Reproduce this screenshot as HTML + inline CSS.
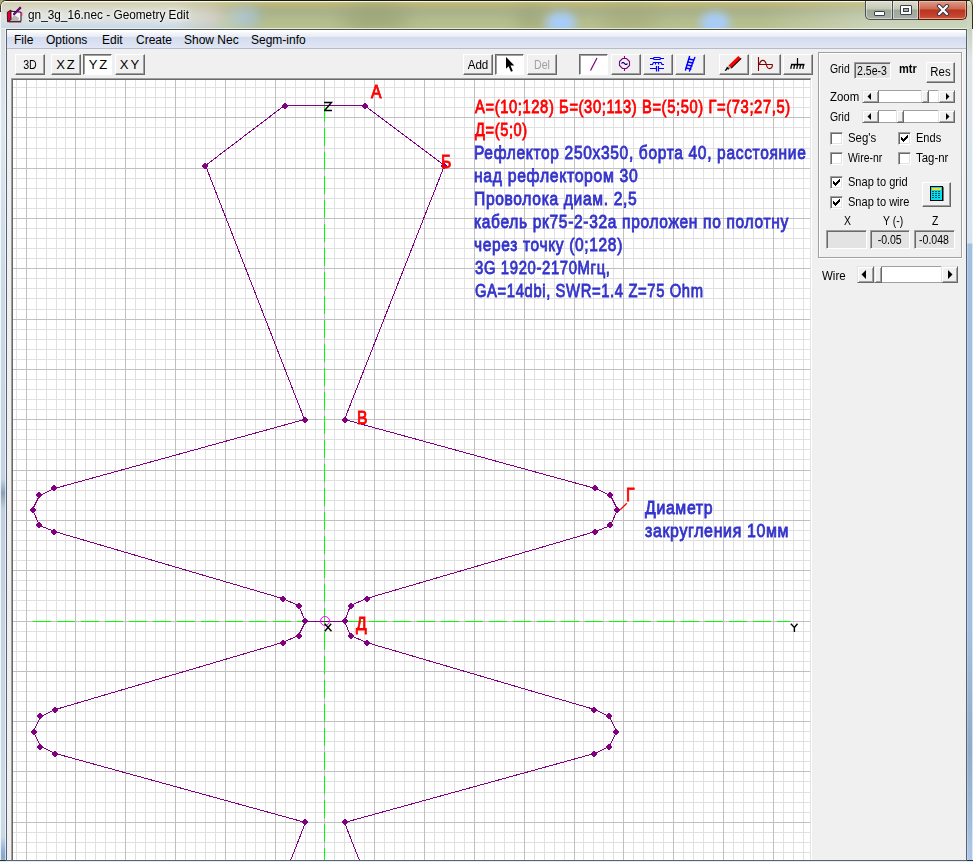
<!DOCTYPE html>
<html><head><meta charset="utf-8">
<style>
*{margin:0;padding:0;box-sizing:border-box}
html,body{width:973px;height:862px;overflow:hidden;font-family:"Liberation Sans",sans-serif;}
body{position:relative;background:#cbdbe8;}
.abs{position:absolute}
#title{left:0;top:0;width:973px;height:30px;overflow:hidden;
 background:linear-gradient(180deg,#1a1a10 0,#1a1a10 1px,#f4f4e8 1px,#c8c490 2px,#bcb878 4px,#acb088 10px,#aab48c 14px,#b4bc8c 20px,#b8c090 26px,#b8c090 28px);}
#title .blob{position:absolute;border-radius:50%;filter:blur(6px)}
#frameL{left:0;top:29px;width:6px;height:833px;background:linear-gradient(90deg,rgba(255,255,255,.8) 0,rgba(255,255,255,.8) 1px,rgba(255,255,255,0) 1px,rgba(255,255,255,0) 5px,rgba(255,255,255,.6) 5px),linear-gradient(180deg,#d8e0e4 0,#dce6f0 100px,#cbdbe8 250px,#c4d4e4 450px,#8ca0b8 464px,#c0d0e0 480px,#cbdbe8 780px,#c8d8e4 808px,#90b0d8 822px,#88a8c8 829px,#a0b8a8 831px)}
#frameR{left:966px;top:29px;width:7px;height:833px;background:linear-gradient(90deg,rgba(255,255,255,.5) 1px,rgba(255,255,255,0) 2px,rgba(255,255,255,0) 6px,rgba(255,255,255,.6) 6px),linear-gradient(180deg,#c8d0c0 0,#dfe6e8 31px,#d8e4f0 214px,#a4c0e0 215px,#a4c0e0 600px,#90acc8 720px,#a0bcdc 790px,#b0c8e4 833px)}
#client{left:6px;top:29px;width:961px;height:832px;border:1px solid #5a6470;border-top-color:#4c5444;background:#f0f0f0}
#menubar{left:7px;top:30px;width:959px;height:19px;background:linear-gradient(180deg,#ffffff 0,#ffffff 1px,#f4f6fa 3px,#e9edf5 6px,#e6eaf4 7px,#d3dbee 7px,#d6def0 10px,#dfe5f3 17px,#e2e8f5 18px);border-bottom:1px solid #b4bccc}
.menu{position:absolute;top:33px;font-size:12px;color:#000;line-height:14px}
.btn{position:absolute;height:21px;background:#f0f0f0;border-top:1px solid #fff;border-left:1px solid #fff;border-right:1px solid #696969;border-bottom:1px solid #696969;box-shadow:inset -1px -1px 0 #a0a0a0;}
.btn.pressed{background:#fff;border-top:1px solid #696969;border-left:1px solid #696969;border-right:1px solid #fff;border-bottom:1px solid #fff;box-shadow:inset 1px 1px 0 #a0a0a0;}
.btn span{position:absolute;left:0;right:0;text-align:center;font-size:12.5px;top:3px;line-height:15px;color:#000;transform:scaleX(.85)}
#canvas{left:11px;top:78px;width:800px;height:782px;border-top:1px solid #a0a0a0;border-left:1px solid #a0a0a0;}
.t{position:absolute;white-space:nowrap;font-weight:normal;font-size:19px;line-height:23px;-webkit-text-stroke:.85px currentColor;letter-spacing:.8px;transform-origin:0 0;transform:scaleX(0.83)}
.red{color:#ff0000}
.blue{color:#3333cc}
.lbl{position:absolute;font-size:12px;color:#000;line-height:14px;white-space:nowrap;transform-origin:0 0;transform:scaleX(.87)}
.cb{position:absolute;width:13px;height:13px;background:#fff;border-top:1px solid #a0a0a0;border-left:1px solid #a0a0a0;border-right:1px solid #fff;border-bottom:1px solid #fff;box-shadow:inset 1px 1px 0 #696969, inset -1px -1px 0 #e3e3e3}
.tb{position:absolute;background:#e6e6e6;border-top:1px solid #a0a0a0;border-left:1px solid #a0a0a0;border-right:1px solid #fff;border-bottom:1px solid #fff;box-shadow:inset 1px 1px 0 #696969, inset -1px -1px 0 #e3e3e3;font-size:12px;text-align:center;line-height:14px;color:#000}
.trk{position:absolute;background:#fff;border-top:1px solid #a0a0a0;border-bottom:1px solid #a0a0a0}
.tb span{display:inline-block;transform:scaleX(.88)}
.tb{background:#e3e3e3}
.sbb{position:absolute;background:#f0f0f0;border-top:1px solid #e3e3e3;border-left:1px solid #e3e3e3;border-right:1px solid #696969;border-bottom:1px solid #696969;box-shadow:inset 1px 1px 0 #fff, inset -1px -1px 0 #a0a0a0}
</style></head><body>

<div class="abs" style="left:0;top:0;width:973px;height:862px;background:#a8a878"></div>
<div id="title" class="abs" style="border-radius:6px 6px 0 0">
 <div class="blob" style="left:196px;top:8px;width:24px;height:20px;background:#d8b8c0;opacity:.6"></div>
 <div class="blob" style="left:230px;top:6px;width:30px;height:22px;background:#a0c0d0;opacity:.8"></div>
 <div class="blob" style="left:340px;top:6px;width:70px;height:26px;background:#949c70;opacity:.7;filter:blur(10px)"></div>
 <div class="blob" style="left:515px;top:6px;width:30px;height:26px;background:#98a074;opacity:.6;filter:blur(8px)"></div>
 <div class="blob" style="left:600px;top:6px;width:60px;height:26px;background:#a0a474;opacity:.6;filter:blur(10px)"></div>
 <div class="blob" style="left:546px;top:12px;width:30px;height:22px;background:#a8ccf8;opacity:1;filter:blur(4px)"></div>
 <div class="blob" style="left:700px;top:12px;width:30px;height:22px;background:#a8ccf8;opacity:1;filter:blur(4px)"></div>
 <div class="abs" style="left:0;top:1px;width:300px;height:28px;background:linear-gradient(180deg,#f0f0e0 0,#d4d0b0 2px,#d8d8c8 7px,#e0e2dc 14px,#d8e0e4 21px,#cad8e8 27px);-webkit-mask-image:linear-gradient(90deg,#000 0,#000 175px,rgba(0,0,0,.5) 215px,transparent 262px)"></div>
 <div class="abs" style="left:760px;top:1px;width:213px;height:28px;background:linear-gradient(180deg,rgba(220,220,190,.2) 0,rgba(215,222,205,.55) 14px,rgba(210,222,210,.7) 27px);-webkit-mask-image:linear-gradient(90deg,transparent 0,#000 120px)"></div>
 <div class="abs" style="left:0;top:0;width:973px;height:1px;background:#1a1a10"></div>
 <div class="abs" style="left:0;top:1px;width:973px;height:1px;background:rgba(255,255,240,.8)"></div>
 <div class="abs" style="left:0;top:28px;width:973px;height:1px;background:rgba(240,244,240,.8)"></div>
 <div class="abs" style="left:0;top:0;width:6px;height:6px;background:#a8a070"></div>
 <div class="abs" style="left:0;top:0;width:12px;height:12px;border-radius:6px 0 0 0;border-top:1px solid #1a1a10;border-left:1px solid #3a3a30;background:linear-gradient(180deg,#f0f0e0 0,#d4d0b0 2px,#d8d8c8 7px)"></div>
 <div class="abs" style="left:1px;top:1px;width:10px;height:10px;border-radius:5px 0 0 0;border-top:1px solid rgba(255,255,245,.8);border-left:1px solid rgba(255,255,245,.8)"></div>
 <div class="abs" style="left:0;top:12px;width:1px;height:18px;background:#f0f4f4"></div>
</div>
<!-- title icon -->
<svg class="abs" style="left:6px;top:6px" width="20" height="20" viewBox="0 0 20 20">
 <path d="M2.5,16.2 H15.2" stroke="#c04848" stroke-width="1.2" opacity=".8"/>
 <path d="M5,5.2 L15,6.2 V15.3 L2.4,15.3 Z" fill="#f4f4f4" stroke="#101018" stroke-width="1"/>
 <path d="M3.5,15 L8,9 L13,12 L12,15 Z" fill="#b8b8b8"/>
 <path d="M1.3,6.2 L4.9,4 L5.1,13.5 L1.5,15.8 Z" fill="#e00030" stroke="#200010" stroke-width=".8"/>
 <path d="M7.5,8.8 L14.8,1.2" stroke="#300030" stroke-width="2.2"/>
 <path d="M7.5,8.8 L14.8,1.2" stroke="#a000b0" stroke-width="1.1"/>
 <path d="M15.2,6 L16.3,6.5 V9.8 L15.2,10.2 Z" fill="#ff1090"/>
</svg>
<div class="abs" style="left:28px;top:8px;font-size:12px;line-height:14px;color:#000;text-shadow:0 0 6px #fff,0 0 3px #fff;transform-origin:0 0;transform:scaleX(.985)">gn_3g_16.nec - Geometry Edit</div>

<!-- caption buttons -->
<div class="abs" style="left:865px;top:1px;width:28px;height:19px;border:1px solid #4a4e58;border-top:none;border-radius:0 0 0 5px;background:linear-gradient(180deg,#dcdfd0 0,#c4c8b4 8px,#9ea898 9px,#a8b0a4 18px);box-shadow:inset 0 0 0 1px rgba(255,255,255,.45)"></div>
<div class="abs" style="left:874px;top:11px;width:11px;height:5px;border:1px solid #384050;background:#fff;border-radius:1px"></div>
<div class="abs" style="left:892px;top:1px;width:27px;height:19px;border:1px solid #4a4e58;border-top:none;background:linear-gradient(180deg,#dcdfd0 0,#c4c8b4 8px,#9ea898 9px,#a8b0a4 18px);box-shadow:inset 0 0 0 1px rgba(255,255,255,.45)"></div>
<div class="abs" style="left:900px;top:5px;width:12px;height:10px;border:1px solid #384050;background:#fff;border-radius:1px"><div style="margin:2px;width:6px;height:4px;background:#a8b490;border:1px solid #384050"></div></div>
<div class="abs" style="left:918px;top:1px;width:49px;height:19px;border:1px solid #4a2018;border-top:none;border-radius:0 0 5px 0;background:linear-gradient(180deg,#e09c8c 0,#cc6850 8px,#b83420 9px,#c84830 16px,#d86848 18px);box-shadow:inset 0 0 0 1px rgba(255,220,200,.5)"></div>
<svg class="abs" style="left:936px;top:4px" width="14" height="12" viewBox="0 0 14 12"><path d="M3,2 L11,10 M11,2 L3,10" stroke="#3a3a48" stroke-width="4.2" stroke-linecap="round"/><path d="M3,2 L11,10 M11,2 L3,10" stroke="#fff" stroke-width="2.2" stroke-linecap="round"/></svg>
<div class="abs" style="left:967px;top:0;width:6px;height:30px;background:linear-gradient(180deg,#1a1a10 0,#1a1a10 1px,#e8ecd8 1px,#c8ccb0 6px,#d0d8c8 30px);border-radius:0 6px 0 0;border-right:1px solid #303020"></div>

<div id="frameL" class="abs"></div>
<div id="frameR" class="abs"></div>
<div class="abs" style="left:0;top:861px;width:973px;height:1px;background:#e0ecf8"></div>
<div class="abs" style="left:0;top:860px;width:973px;height:1px;background:#283038"></div>

<div id="client" class="abs"></div>
<div id="menubar" class="abs"></div>
<div class="menu" style="left:14px">File</div>
<div class="menu" style="left:46px">Options</div>
<div class="menu" style="left:102px">Edit</div>
<div class="menu" style="left:136px">Create</div>
<div class="menu" style="left:184px">Show Nec</div>
<div class="menu" style="left:251px">Segm-info</div>

<!-- toolbar -->
<div class="btn" style="left:15px;top:54px;width:30px"><span>3D</span></div>
<div class="btn" style="left:51px;top:54px;width:30px"><span style="letter-spacing:2px;padding-left:1px;transform:none;font-size:13px;top:2px">XZ</span></div>
<div class="btn pressed" style="left:83px;top:54px;width:29px"><span style="letter-spacing:2px;padding-left:3px;transform:none;font-size:13px;top:2px">YZ</span></div>
<div class="btn" style="left:115px;top:54px;width:30px"><span style="letter-spacing:2px;padding-left:1px;transform:none;font-size:13px;top:2px">XY</span></div>

<div class="btn" style="left:463px;top:54px;width:30px"><span style="transform:scaleX(.93)">Add</span></div>
<div class="btn pressed" style="left:495px;top:54px;width:29px">
 <svg style="position:absolute;left:0;top:0" width="27" height="19" viewBox="0 0 27 19"><path d="M10,2 V13.8 L12.6,11.2 L15,16.8 L16.8,16 L14.5,10.6 L18.3,10.4 Z" fill="#000"/></svg>
</div>
<div class="btn" style="left:527px;top:54px;width:30px"><span style="color:#a0a0a0">Del</span></div>

<div class="btn pressed" style="left:579px;top:54px;width:29px">
 <svg style="position:absolute;left:0;top:0" width="27" height="19"><path d="M10.5,15.5 L17,3" stroke="#800080" stroke-width="1.2"/></svg>
</div>
<div class="btn" style="left:611px;top:54px;width:30px">
 <svg style="position:absolute;left:0;top:0" width="28" height="19" viewBox="0 0 28 19"><g fill="none" stroke="#800080" stroke-width="1.1"><path d="M10.5,3.5 H14.5 L17.5,6.5 V10.5 L14.5,13.5 H10.5 L7.5,10.5 V6.5 Z"/><path d="M12.5,1 V3.5 M12.5,13.5 V16"/></g><path d="M9.5,8.5 L10.5,7.5 H11.5 L13.5,9.5 H14.5 L15.5,8.5" fill="none" stroke="#000080" stroke-width="1.1"/></svg>
</div>
<div class="btn" style="left:643px;top:54px;width:30px">
 <svg style="position:absolute;left:0;top:0" width="28" height="19" viewBox="0 0 28 19"><g stroke="#0000ff" stroke-width="1.2" fill="none"><path d="M6,3.5 H9.5 M16.5,3.5 H20"/><rect x="9.5" y="2.5" width="7" height="2" rx="1"/><path d="M6,9.5 H8.5 L9.5,7.5 H11.5 V9.5 M11.5,7.5 H14.5 V9.5 M14.5,7.5 H17 L18,9.5 H20"/><path d="M6,13.5 H12.5 M14.5,13.5 H20 M12.5,11 V16.5 M14.5,11 V16.5"/></g></svg>
</div>
<div class="btn" style="left:675px;top:54px;width:30px">
 <svg style="position:absolute;left:0;top:0" width="28" height="19" viewBox="0 0 28 19"><g stroke="#0000ff" stroke-width="1.4" fill="none" stroke-linecap="round"><path d="M13.5,1.5 L9.5,15 M18.8,2.5 L13.5,16"/><path d="M13,4 L17.5,5 M12,7 L16.7,8 M11,10 L15.8,11 M10,13 L14.8,14"/></g></svg>
</div>

<div class="btn" style="left:719px;top:54px;width:30px">
 <svg style="position:absolute;left:0;top:0" width="28" height="19" viewBox="0 0 28 19"><path d="M8.5,10.5 L18.3,1 L21,3.6 L11.2,13.2 Z" fill="#ff0000"/><path d="M11.2,13.2 L21.2,3.4" stroke="#000" stroke-width="1.1"/><path d="M8.5,10.6 L11.1,13.2 L9.5,14.3 L7.5,12.3 Z" fill="#a0a8a8"/><path d="M5,15.5 L6.5,14.5 L7.2,12.8 L8.8,14.3" fill="none" stroke="#000" stroke-width="1.4"/></svg>
</div>
<div class="btn" style="left:751px;top:54px;width:30px">
 <svg style="position:absolute;left:0;top:0" width="28" height="19" viewBox="0 0 28 19"><g stroke="#800000" stroke-width="1.1" fill="none"><path d="M6.5,2 V16 M6.5,9.5 H20.5"/><path d="M7.5,9.5 Q8.2,5.4 10.8,5.4 Q13.4,5.4 14.3,9.5 Q15.2,13.6 17.6,13.6 Q20.2,13.6 20.5,9.5"/></g></svg>
</div>
<div class="btn" style="left:783px;top:54px;width:30px">
 <svg style="position:absolute;left:0;top:0" width="28" height="19" viewBox="0 0 28 19"><g stroke="#000" fill="none"><path d="M13.5,3 V9.5" stroke-width="1.2"/><path d="M7,9.6 H20.5" stroke-width="1.6"/><path d="M7.5,10 L6.8,13.8 M10.5,10 L9.8,13.8 M13.5,10 L12.8,13.8 M16.5,10 L15.8,13.8 M19.5,10 L18.8,13.8" stroke-width="1.3"/></g></svg>
</div>

<!-- canvas -->
<div id="canvas" class="abs"></div>
<div class="abs" style="left:12px;top:79px;width:799px;height:781px;border-top:1px solid #696969;border-left:1px solid #696969;border-right:1px solid #e3e3e3;background:#fff"></div>
<div class="abs" style="left:811px;top:78px;width:1px;height:782px;background:#fff"></div>
<svg class="abs" style="left:0;top:0" width="973" height="862" shape-rendering="crispEdges">
<rect x="16" y="80" width="1" height="780" fill="#e0e0e0"/>
<rect x="36" y="80" width="1" height="780" fill="#e0e0e0"/>
<rect x="46" y="80" width="1" height="780" fill="#e0e0e0"/>
<rect x="56" y="80" width="1" height="780" fill="#e0e0e0"/>
<rect x="65" y="80" width="1" height="780" fill="#e0e0e0"/>
<rect x="85" y="80" width="1" height="780" fill="#e0e0e0"/>
<rect x="95" y="80" width="1" height="780" fill="#e0e0e0"/>
<rect x="105" y="80" width="1" height="780" fill="#e0e0e0"/>
<rect x="115" y="80" width="1" height="780" fill="#e0e0e0"/>
<rect x="135" y="80" width="1" height="780" fill="#e0e0e0"/>
<rect x="145" y="80" width="1" height="780" fill="#e0e0e0"/>
<rect x="155" y="80" width="1" height="780" fill="#e0e0e0"/>
<rect x="165" y="80" width="1" height="780" fill="#e0e0e0"/>
<rect x="185" y="80" width="1" height="780" fill="#e0e0e0"/>
<rect x="195" y="80" width="1" height="780" fill="#e0e0e0"/>
<rect x="205" y="80" width="1" height="780" fill="#e0e0e0"/>
<rect x="215" y="80" width="1" height="780" fill="#e0e0e0"/>
<rect x="235" y="80" width="1" height="780" fill="#e0e0e0"/>
<rect x="245" y="80" width="1" height="780" fill="#e0e0e0"/>
<rect x="255" y="80" width="1" height="780" fill="#e0e0e0"/>
<rect x="265" y="80" width="1" height="780" fill="#e0e0e0"/>
<rect x="285" y="80" width="1" height="780" fill="#e0e0e0"/>
<rect x="295" y="80" width="1" height="780" fill="#e0e0e0"/>
<rect x="305" y="80" width="1" height="780" fill="#e0e0e0"/>
<rect x="315" y="80" width="1" height="780" fill="#e0e0e0"/>
<rect x="334" y="80" width="1" height="780" fill="#e0e0e0"/>
<rect x="344" y="80" width="1" height="780" fill="#e0e0e0"/>
<rect x="354" y="80" width="1" height="780" fill="#e0e0e0"/>
<rect x="364" y="80" width="1" height="780" fill="#e0e0e0"/>
<rect x="384" y="80" width="1" height="780" fill="#e0e0e0"/>
<rect x="394" y="80" width="1" height="780" fill="#e0e0e0"/>
<rect x="404" y="80" width="1" height="780" fill="#e0e0e0"/>
<rect x="414" y="80" width="1" height="780" fill="#e0e0e0"/>
<rect x="434" y="80" width="1" height="780" fill="#e0e0e0"/>
<rect x="444" y="80" width="1" height="780" fill="#e0e0e0"/>
<rect x="454" y="80" width="1" height="780" fill="#e0e0e0"/>
<rect x="464" y="80" width="1" height="780" fill="#e0e0e0"/>
<rect x="484" y="80" width="1" height="780" fill="#e0e0e0"/>
<rect x="494" y="80" width="1" height="780" fill="#e0e0e0"/>
<rect x="504" y="80" width="1" height="780" fill="#e0e0e0"/>
<rect x="514" y="80" width="1" height="780" fill="#e0e0e0"/>
<rect x="534" y="80" width="1" height="780" fill="#e0e0e0"/>
<rect x="544" y="80" width="1" height="780" fill="#e0e0e0"/>
<rect x="554" y="80" width="1" height="780" fill="#e0e0e0"/>
<rect x="564" y="80" width="1" height="780" fill="#e0e0e0"/>
<rect x="583" y="80" width="1" height="780" fill="#e0e0e0"/>
<rect x="593" y="80" width="1" height="780" fill="#e0e0e0"/>
<rect x="603" y="80" width="1" height="780" fill="#e0e0e0"/>
<rect x="613" y="80" width="1" height="780" fill="#e0e0e0"/>
<rect x="633" y="80" width="1" height="780" fill="#e0e0e0"/>
<rect x="643" y="80" width="1" height="780" fill="#e0e0e0"/>
<rect x="653" y="80" width="1" height="780" fill="#e0e0e0"/>
<rect x="663" y="80" width="1" height="780" fill="#e0e0e0"/>
<rect x="683" y="80" width="1" height="780" fill="#e0e0e0"/>
<rect x="693" y="80" width="1" height="780" fill="#e0e0e0"/>
<rect x="703" y="80" width="1" height="780" fill="#e0e0e0"/>
<rect x="713" y="80" width="1" height="780" fill="#e0e0e0"/>
<rect x="733" y="80" width="1" height="780" fill="#e0e0e0"/>
<rect x="743" y="80" width="1" height="780" fill="#e0e0e0"/>
<rect x="753" y="80" width="1" height="780" fill="#e0e0e0"/>
<rect x="763" y="80" width="1" height="780" fill="#e0e0e0"/>
<rect x="783" y="80" width="1" height="780" fill="#e0e0e0"/>
<rect x="793" y="80" width="1" height="780" fill="#e0e0e0"/>
<rect x="803" y="80" width="1" height="780" fill="#e0e0e0"/>
<rect x="13" y="87" width="797" height="1" fill="#e0e0e0"/>
<rect x="13" y="97" width="797" height="1" fill="#e0e0e0"/>
<rect x="13" y="107" width="797" height="1" fill="#e0e0e0"/>
<rect x="13" y="127" width="797" height="1" fill="#e0e0e0"/>
<rect x="13" y="137" width="797" height="1" fill="#e0e0e0"/>
<rect x="13" y="148" width="797" height="1" fill="#e0e0e0"/>
<rect x="13" y="158" width="797" height="1" fill="#e0e0e0"/>
<rect x="13" y="178" width="797" height="1" fill="#e0e0e0"/>
<rect x="13" y="188" width="797" height="1" fill="#e0e0e0"/>
<rect x="13" y="198" width="797" height="1" fill="#e0e0e0"/>
<rect x="13" y="208" width="797" height="1" fill="#e0e0e0"/>
<rect x="13" y="228" width="797" height="1" fill="#e0e0e0"/>
<rect x="13" y="238" width="797" height="1" fill="#e0e0e0"/>
<rect x="13" y="248" width="797" height="1" fill="#e0e0e0"/>
<rect x="13" y="258" width="797" height="1" fill="#e0e0e0"/>
<rect x="13" y="278" width="797" height="1" fill="#e0e0e0"/>
<rect x="13" y="288" width="797" height="1" fill="#e0e0e0"/>
<rect x="13" y="298" width="797" height="1" fill="#e0e0e0"/>
<rect x="13" y="309" width="797" height="1" fill="#e0e0e0"/>
<rect x="13" y="329" width="797" height="1" fill="#e0e0e0"/>
<rect x="13" y="339" width="797" height="1" fill="#e0e0e0"/>
<rect x="13" y="349" width="797" height="1" fill="#e0e0e0"/>
<rect x="13" y="359" width="797" height="1" fill="#e0e0e0"/>
<rect x="13" y="379" width="797" height="1" fill="#e0e0e0"/>
<rect x="13" y="389" width="797" height="1" fill="#e0e0e0"/>
<rect x="13" y="399" width="797" height="1" fill="#e0e0e0"/>
<rect x="13" y="409" width="797" height="1" fill="#e0e0e0"/>
<rect x="13" y="429" width="797" height="1" fill="#e0e0e0"/>
<rect x="13" y="439" width="797" height="1" fill="#e0e0e0"/>
<rect x="13" y="449" width="797" height="1" fill="#e0e0e0"/>
<rect x="13" y="459" width="797" height="1" fill="#e0e0e0"/>
<rect x="13" y="480" width="797" height="1" fill="#e0e0e0"/>
<rect x="13" y="490" width="797" height="1" fill="#e0e0e0"/>
<rect x="13" y="500" width="797" height="1" fill="#e0e0e0"/>
<rect x="13" y="510" width="797" height="1" fill="#e0e0e0"/>
<rect x="13" y="530" width="797" height="1" fill="#e0e0e0"/>
<rect x="13" y="540" width="797" height="1" fill="#e0e0e0"/>
<rect x="13" y="550" width="797" height="1" fill="#e0e0e0"/>
<rect x="13" y="560" width="797" height="1" fill="#e0e0e0"/>
<rect x="13" y="580" width="797" height="1" fill="#e0e0e0"/>
<rect x="13" y="590" width="797" height="1" fill="#e0e0e0"/>
<rect x="13" y="600" width="797" height="1" fill="#e0e0e0"/>
<rect x="13" y="610" width="797" height="1" fill="#e0e0e0"/>
<rect x="13" y="631" width="797" height="1" fill="#e0e0e0"/>
<rect x="13" y="641" width="797" height="1" fill="#e0e0e0"/>
<rect x="13" y="651" width="797" height="1" fill="#e0e0e0"/>
<rect x="13" y="661" width="797" height="1" fill="#e0e0e0"/>
<rect x="13" y="681" width="797" height="1" fill="#e0e0e0"/>
<rect x="13" y="691" width="797" height="1" fill="#e0e0e0"/>
<rect x="13" y="701" width="797" height="1" fill="#e0e0e0"/>
<rect x="13" y="711" width="797" height="1" fill="#e0e0e0"/>
<rect x="13" y="731" width="797" height="1" fill="#e0e0e0"/>
<rect x="13" y="741" width="797" height="1" fill="#e0e0e0"/>
<rect x="13" y="751" width="797" height="1" fill="#e0e0e0"/>
<rect x="13" y="761" width="797" height="1" fill="#e0e0e0"/>
<rect x="13" y="781" width="797" height="1" fill="#e0e0e0"/>
<rect x="13" y="792" width="797" height="1" fill="#e0e0e0"/>
<rect x="13" y="802" width="797" height="1" fill="#e0e0e0"/>
<rect x="13" y="812" width="797" height="1" fill="#e0e0e0"/>
<rect x="13" y="832" width="797" height="1" fill="#e0e0e0"/>
<rect x="13" y="842" width="797" height="1" fill="#e0e0e0"/>
<rect x="13" y="852" width="797" height="1" fill="#e0e0e0"/>
<rect x="26" y="80" width="1" height="780" fill="#c0c0c0"/>
<rect x="75" y="80" width="1" height="780" fill="#c0c0c0"/>
<rect x="125" y="80" width="1" height="780" fill="#c0c0c0"/>
<rect x="175" y="80" width="1" height="780" fill="#c0c0c0"/>
<rect x="225" y="80" width="1" height="780" fill="#c0c0c0"/>
<rect x="275" y="80" width="1" height="780" fill="#c0c0c0"/>
<rect x="324" y="80" width="1" height="780" fill="#c0c0c0"/>
<rect x="374" y="80" width="1" height="780" fill="#c0c0c0"/>
<rect x="424" y="80" width="1" height="780" fill="#c0c0c0"/>
<rect x="474" y="80" width="1" height="780" fill="#c0c0c0"/>
<rect x="524" y="80" width="1" height="780" fill="#c0c0c0"/>
<rect x="574" y="80" width="1" height="780" fill="#c0c0c0"/>
<rect x="623" y="80" width="1" height="780" fill="#c0c0c0"/>
<rect x="673" y="80" width="1" height="780" fill="#c0c0c0"/>
<rect x="723" y="80" width="1" height="780" fill="#c0c0c0"/>
<rect x="773" y="80" width="1" height="780" fill="#c0c0c0"/>
<rect x="13" y="117" width="797" height="1" fill="#c0c0c0"/>
<rect x="13" y="168" width="797" height="1" fill="#c0c0c0"/>
<rect x="13" y="218" width="797" height="1" fill="#c0c0c0"/>
<rect x="13" y="268" width="797" height="1" fill="#c0c0c0"/>
<rect x="13" y="319" width="797" height="1" fill="#c0c0c0"/>
<rect x="13" y="369" width="797" height="1" fill="#c0c0c0"/>
<rect x="13" y="419" width="797" height="1" fill="#c0c0c0"/>
<rect x="13" y="470" width="797" height="1" fill="#c0c0c0"/>
<rect x="13" y="520" width="797" height="1" fill="#c0c0c0"/>
<rect x="13" y="570" width="797" height="1" fill="#c0c0c0"/>
<rect x="13" y="621" width="797" height="1" fill="#c0c0c0"/>
<rect x="13" y="671" width="797" height="1" fill="#c0c0c0"/>
<rect x="13" y="721" width="797" height="1" fill="#c0c0c0"/>
<rect x="13" y="771" width="797" height="1" fill="#c0c0c0"/>
<rect x="13" y="822" width="797" height="1" fill="#c0c0c0"/>
<rect x="33" y="621" width="18" height="1" fill="#00ff00"/>
<rect x="57" y="621" width="18" height="1" fill="#00ff00"/>
<rect x="81" y="621" width="18" height="1" fill="#00ff00"/>
<rect x="105" y="621" width="18" height="1" fill="#00ff00"/>
<rect x="129" y="621" width="18" height="1" fill="#00ff00"/>
<rect x="153" y="621" width="18" height="1" fill="#00ff00"/>
<rect x="177" y="621" width="18" height="1" fill="#00ff00"/>
<rect x="201" y="621" width="18" height="1" fill="#00ff00"/>
<rect x="225" y="621" width="18" height="1" fill="#00ff00"/>
<rect x="249" y="621" width="18" height="1" fill="#00ff00"/>
<rect x="273" y="621" width="18" height="1" fill="#00ff00"/>
<rect x="297" y="621" width="18" height="1" fill="#00ff00"/>
<rect x="321" y="621" width="18" height="1" fill="#00ff00"/>
<rect x="345" y="621" width="18" height="1" fill="#00ff00"/>
<rect x="369" y="621" width="18" height="1" fill="#00ff00"/>
<rect x="393" y="621" width="18" height="1" fill="#00ff00"/>
<rect x="417" y="621" width="18" height="1" fill="#00ff00"/>
<rect x="441" y="621" width="18" height="1" fill="#00ff00"/>
<rect x="465" y="621" width="18" height="1" fill="#00ff00"/>
<rect x="489" y="621" width="18" height="1" fill="#00ff00"/>
<rect x="513" y="621" width="18" height="1" fill="#00ff00"/>
<rect x="537" y="621" width="18" height="1" fill="#00ff00"/>
<rect x="561" y="621" width="18" height="1" fill="#00ff00"/>
<rect x="585" y="621" width="18" height="1" fill="#00ff00"/>
<rect x="609" y="621" width="18" height="1" fill="#00ff00"/>
<rect x="633" y="621" width="18" height="1" fill="#00ff00"/>
<rect x="657" y="621" width="18" height="1" fill="#00ff00"/>
<rect x="681" y="621" width="18" height="1" fill="#00ff00"/>
<rect x="705" y="621" width="18" height="1" fill="#00ff00"/>
<rect x="729" y="621" width="18" height="1" fill="#00ff00"/>
<rect x="753" y="621" width="18" height="1" fill="#00ff00"/>
<rect x="777" y="621" width="13" height="1" fill="#00ff00"/>
<rect x="324" y="104" width="1" height="18" fill="#00ff00"/>
<rect x="324" y="128" width="1" height="18" fill="#00ff00"/>
<rect x="324" y="152" width="1" height="18" fill="#00ff00"/>
<rect x="324" y="176" width="1" height="18" fill="#00ff00"/>
<rect x="324" y="200" width="1" height="18" fill="#00ff00"/>
<rect x="324" y="224" width="1" height="18" fill="#00ff00"/>
<rect x="324" y="248" width="1" height="18" fill="#00ff00"/>
<rect x="324" y="272" width="1" height="18" fill="#00ff00"/>
<rect x="324" y="296" width="1" height="18" fill="#00ff00"/>
<rect x="324" y="320" width="1" height="18" fill="#00ff00"/>
<rect x="324" y="344" width="1" height="18" fill="#00ff00"/>
<rect x="324" y="368" width="1" height="18" fill="#00ff00"/>
<rect x="324" y="392" width="1" height="18" fill="#00ff00"/>
<rect x="324" y="416" width="1" height="18" fill="#00ff00"/>
<rect x="324" y="440" width="1" height="18" fill="#00ff00"/>
<rect x="324" y="464" width="1" height="18" fill="#00ff00"/>
<rect x="324" y="488" width="1" height="18" fill="#00ff00"/>
<rect x="324" y="512" width="1" height="18" fill="#00ff00"/>
<rect x="324" y="536" width="1" height="18" fill="#00ff00"/>
<rect x="324" y="560" width="1" height="18" fill="#00ff00"/>
<rect x="324" y="584" width="1" height="18" fill="#00ff00"/>
<rect x="324" y="608" width="1" height="18" fill="#00ff00"/>
<rect x="324" y="632" width="1" height="18" fill="#00ff00"/>
<rect x="324" y="656" width="1" height="18" fill="#00ff00"/>
<rect x="324" y="680" width="1" height="18" fill="#00ff00"/>
<rect x="324" y="704" width="1" height="18" fill="#00ff00"/>
<rect x="324" y="728" width="1" height="18" fill="#00ff00"/>
<rect x="324" y="752" width="1" height="18" fill="#00ff00"/>
<rect x="324" y="776" width="1" height="18" fill="#00ff00"/>
<rect x="324" y="800" width="1" height="18" fill="#00ff00"/>
<rect x="324" y="824" width="1" height="18" fill="#00ff00"/>
<rect x="324" y="848" width="1" height="12" fill="#00ff00"/>
</svg>
<svg class="abs" style="left:0;top:0" width="973" height="862">
<clipPath id="cc"><rect x="13" y="80" width="797" height="780"/></clipPath>
<g clip-path="url(#cc)">
<path d="M364.5,105.5 L444.5,165.5 L344.5,419.5 L595.5,488.5 L610.5,495.5 L617.5,509.5 L610.5,525.5 L595.5,531.5 L366.5,598.5 L350.5,605.5 L344.5,621.5 L350.5,635.5 L366.5,642.5 L594.5,709.5 L609.5,716.5 L616.5,731.5 L609.5,746.5 L594.5,753.5 L344.5,822.5 L444.5,1076.5" fill="none" stroke="#800080" stroke-width="1" shape-rendering="crispEdges"/>
<path d="M284.5,105.5 L205.5,165.5 L304.5,419.5 L54.5,488.5 L39.5,495.5 L32.5,509.5 L39.5,525.5 L54.5,531.5 L282.5,598.5 L298.5,605.5 L305.5,621.5 L298.5,635.5 L282.5,642.5 L55.5,709.5 L40.5,716.5 L33.5,731.5 L40.5,746.5 L55.5,753.5 L305.5,822.5 L205.5,1076.5" fill="none" stroke="#800080" stroke-width="1" shape-rendering="crispEdges"/>
<path d="M364.5,105.5 L284.5,105.5" fill="none" stroke="#800080" stroke-width="1" shape-rendering="crispEdges"/>
<path d="M344.5,621.5 L305.5,621.5" fill="none" stroke="#800080" stroke-width="1" shape-rendering="crispEdges"/>
<path d="M32,507h2v1h1v1h1v2h-1v1h-1v1h-2v-1h-1v-1h-1v-2h1v-1h1Z" fill="#800080"/>
<path d="M593,751h2v1h1v1h1v2h-1v1h-1v1h-2v-1h-1v-1h-1v-2h1v-1h1Z" fill="#800080"/>
<path d="M608,713h2v1h1v1h1v2h-1v1h-1v1h-2v-1h-1v-1h-1v-2h1v-1h1Z" fill="#800080"/>
<path d="M594,485h2v1h1v1h1v2h-1v1h-1v1h-2v-1h-1v-1h-1v-2h1v-1h1Z" fill="#800080"/>
<path d="M609,492h2v1h1v1h1v2h-1v1h-1v1h-2v-1h-1v-1h-1v-2h1v-1h1Z" fill="#800080"/>
<path d="M443,1073h2v1h1v1h1v2h-1v1h-1v1h-2v-1h-1v-1h-1v-2h1v-1h1Z" fill="#800080"/>
<path d="M54,707h2v1h1v1h1v2h-1v1h-1v1h-2v-1h-1v-1h-1v-2h1v-1h1Z" fill="#800080"/>
<path d="M364,103h2v1h1v1h1v2h-1v1h-1v1h-2v-1h-1v-1h-1v-2h1v-1h1Z" fill="#800080"/>
<path d="M298,603h2v1h1v1h1v2h-1v1h-1v1h-2v-1h-1v-1h-1v-2h1v-1h1Z" fill="#800080"/>
<path d="M443,163h2v1h1v1h1v2h-1v1h-1v1h-2v-1h-1v-1h-1v-2h1v-1h1Z" fill="#800080"/>
<path d="M615,729h2v1h1v1h1v2h-1v1h-1v1h-2v-1h-1v-1h-1v-2h1v-1h1Z" fill="#800080"/>
<path d="M608,744h2v1h1v1h1v2h-1v1h-1v1h-2v-1h-1v-1h-1v-2h1v-1h1Z" fill="#800080"/>
<path d="M609,522h2v1h1v1h1v2h-1v1h-1v1h-2v-1h-1v-1h-1v-2h1v-1h1Z" fill="#800080"/>
<path d="M616,507h2v1h1v1h1v2h-1v1h-1v1h-2v-1h-1v-1h-1v-2h1v-1h1Z" fill="#800080"/>
<path d="M344,618h2v1h1v1h1v2h-1v1h-1v1h-2v-1h-1v-1h-1v-2h1v-1h1Z" fill="#800080"/>
<path d="M298,633h2v1h1v1h1v2h-1v1h-1v1h-2v-1h-1v-1h-1v-2h1v-1h1Z" fill="#800080"/>
<path d="M344,819h2v1h1v1h1v2h-1v1h-1v1h-2v-1h-1v-1h-1v-2h1v-1h1Z" fill="#800080"/>
<path d="M593,707h2v1h1v1h1v2h-1v1h-1v1h-2v-1h-1v-1h-1v-2h1v-1h1Z" fill="#800080"/>
<path d="M38,492h2v1h1v1h1v2h-1v1h-1v1h-2v-1h-1v-1h-1v-2h1v-1h1Z" fill="#800080"/>
<path d="M39,713h2v1h1v1h1v2h-1v1h-1v1h-2v-1h-1v-1h-1v-2h1v-1h1Z" fill="#800080"/>
<path d="M284,103h2v1h1v1h1v2h-1v1h-1v1h-2v-1h-1v-1h-1v-2h1v-1h1Z" fill="#800080"/>
<path d="M204,1073h2v1h1v1h1v2h-1v1h-1v1h-2v-1h-1v-1h-1v-2h1v-1h1Z" fill="#800080"/>
<path d="M344,417h2v1h1v1h1v2h-1v1h-1v1h-2v-1h-1v-1h-1v-2h1v-1h1Z" fill="#800080"/>
<path d="M366,640h2v1h1v1h1v2h-1v1h-1v1h-2v-1h-1v-1h-1v-2h1v-1h1Z" fill="#800080"/>
<path d="M282,640h2v1h1v1h1v2h-1v1h-1v1h-2v-1h-1v-1h-1v-2h1v-1h1Z" fill="#800080"/>
<path d="M53,529h2v1h1v1h1v2h-1v1h-1v1h-2v-1h-1v-1h-1v-2h1v-1h1Z" fill="#800080"/>
<path d="M33,729h2v1h1v1h1v2h-1v1h-1v1h-2v-1h-1v-1h-1v-2h1v-1h1Z" fill="#800080"/>
<path d="M350,603h2v1h1v1h1v2h-1v1h-1v1h-2v-1h-1v-1h-1v-2h1v-1h1Z" fill="#800080"/>
<path d="M204,163h2v1h1v1h1v2h-1v1h-1v1h-2v-1h-1v-1h-1v-2h1v-1h1Z" fill="#800080"/>
<path d="M304,618h2v1h1v1h1v2h-1v1h-1v1h-2v-1h-1v-1h-1v-2h1v-1h1Z" fill="#800080"/>
<path d="M54,751h2v1h1v1h1v2h-1v1h-1v1h-2v-1h-1v-1h-1v-2h1v-1h1Z" fill="#800080"/>
<path d="M304,819h2v1h1v1h1v2h-1v1h-1v1h-2v-1h-1v-1h-1v-2h1v-1h1Z" fill="#800080"/>
<path d="M38,522h2v1h1v1h1v2h-1v1h-1v1h-2v-1h-1v-1h-1v-2h1v-1h1Z" fill="#800080"/>
<path d="M304,417h2v1h1v1h1v2h-1v1h-1v1h-2v-1h-1v-1h-1v-2h1v-1h1Z" fill="#800080"/>
<path d="M53,485h2v1h1v1h1v2h-1v1h-1v1h-2v-1h-1v-1h-1v-2h1v-1h1Z" fill="#800080"/>
<path d="M39,744h2v1h1v1h1v2h-1v1h-1v1h-2v-1h-1v-1h-1v-2h1v-1h1Z" fill="#800080"/>
<path d="M366,596h2v1h1v1h1v2h-1v1h-1v1h-2v-1h-1v-1h-1v-2h1v-1h1Z" fill="#800080"/>
<path d="M282,596h2v1h1v1h1v2h-1v1h-1v1h-2v-1h-1v-1h-1v-2h1v-1h1Z" fill="#800080"/>
<path d="M350,633h2v1h1v1h1v2h-1v1h-1v1h-2v-1h-1v-1h-1v-2h1v-1h1Z" fill="#800080"/>
<path d="M594,529h2v1h1v1h1v2h-1v1h-1v1h-2v-1h-1v-1h-1v-2h1v-1h1Z" fill="#800080"/>
<circle cx="325" cy="621" r="4.5" fill="none" stroke="#ff00ff" stroke-width="1"/>
<path d="M620.2,509.8 L626.8,503.2" stroke="#ff0000" stroke-width="1.3"/>
<g stroke="#000" stroke-width="1.4" fill="none">
<path d="M324,102.5 H331.5 L325,110 M324,110.5 H332"/>
<path d="M324.8,623.8 L331.5,631.2 M331.2,623.8 L324.8,631.2"/>
<path d="M790.8,623.8 L794.4,627.5 L797.5,623.8 M794.4,627.5 V632"/>
</g>
</g>
</svg>

<!-- labels on canvas -->
<div class="t red" style="left:371px;top:80px">А</div>
<div class="t red" style="left:441px;top:150px">Б</div>
<div class="t red" style="left:357px;top:406px">В</div>
<div class="t red" style="left:626px;top:483px">Г</div>
<div class="t red" style="left:356px;top:612px">Д</div>
<div class="t red" style="left:474.7px;top:95px;transform:scaleX(0.7744)">А=(10;128) Б=(30;113) В=(5;50) Г=(73;27,5)</div>
<div class="t red" style="left:474.7px;top:118px;transform:scaleX(0.7701)">Д=(5;0)</div>
<div class="t blue" style="left:474.18px;top:141px;transform:scaleX(0.8186)">Рефлектор 250x350, борта 40, расстояние</div>
<div class="t blue" style="left:474.17px;top:164px;transform:scaleX(0.8301)">над рефлектором 30</div>
<div class="t blue" style="left:474.18px;top:187px;transform:scaleX(0.8223)">Проволока диам. 2,5</div>
<div class="t blue" style="left:474.18px;top:210px;transform:scaleX(0.8191)">кабель рк75-2-32а проложен по полотну</div>
<div class="t blue" style="left:474.18px;top:233px;transform:scaleX(0.8167)">через точку (0;128)</div>
<div class="t blue" style="left:475.0px;top:256px;transform:scaleX(0.7826)">3G 1920-2170Мгц,</div>
<div class="t blue" style="left:475.0px;top:279px;transform:scaleX(0.7782)">GA=14dbi, SWR=1.4 Z=75 Ohm</div>
<div class="t blue" style="left:645.0px;top:496px;transform:scaleX(0.8333)">Диаметр</div>
<div class="t blue" style="left:645.0px;top:519px;transform:scaleX(0.8368)">закругления 10мм</div>

<!-- right panel -->
<div class="abs" style="left:818px;top:52px;width:144px;height:206px;border:1px solid #a0a0a0;box-shadow:inset 1px 1px 0 #fff, 1px 1px 0 #fff"></div>
<div class="lbl" style="left:830px;top:62px">Grid</div>
<div class="tb" style="left:854px;top:62px;width:37px;height:17px;padding-top:1px"><span>2.5e-3</span></div>
<div class="lbl" style="left:899px;top:62px;font-weight:bold;transform:scaleX(.92)">mtr</div>
<div class="btn" style="left:926px;top:62px;width:29px;height:21px"><span style="font-size:12px;top:2px;transform:scaleX(.95)">Res</span></div>

<div class="lbl" style="left:830px;top:90px;transform:scaleX(.95)">Zoom</div>
<div class="trk" style="left:862px;top:90px;width:93px;height:13px"></div>
<div class="sbb" style="left:862px;top:90px;width:17px;height:13px"></div>
<div class="sbb" style="left:921px;top:90px;width:8px;height:13px"></div>
<div class="sbb" style="left:938px;top:90px;width:17px;height:13px"></div>
<div class="lbl" style="left:830px;top:110px">Grid</div>
<div class="trk" style="left:862px;top:110px;width:93px;height:13px"></div>
<div class="sbb" style="left:862px;top:110px;width:17px;height:13px"></div>
<div class="sbb" style="left:896px;top:110px;width:8px;height:13px"></div>
<div class="sbb" style="left:938px;top:110px;width:17px;height:13px"></div>

<div class="cb" style="left:830px;top:132px"></div><div class="lbl" style="left:848px;top:131px;transform:scaleX(.95)">Seg's</div>
<div class="cb" style="left:898px;top:132px"></div><div class="lbl" style="left:916px;top:131px;transform:scaleX(.92)">Ends</div>
<div class="cb" style="left:830px;top:152px"></div><div class="lbl" style="left:848px;top:151px">Wire-nr</div>
<div class="cb" style="left:898px;top:152px"></div><div class="lbl" style="left:916px;top:151px;transform:scaleX(.95)">Tag-nr</div>
<div class="cb" style="left:830px;top:176px"></div><div class="lbl" style="left:848px;top:175px;transform:scaleX(.92)">Snap to grid</div>
<div class="cb" style="left:830px;top:196px"></div><div class="lbl" style="left:848px;top:195px;transform:scaleX(.92)">Snap to wire</div>
<svg class="abs" style="left:0;top:0" width="973" height="300"><path fill="#000" d="M907,135h1v1h-1ZM906,136h2v1h-2ZM901,137h1v1h-1ZM905,137h3v1h-3ZM901,138h2v1h-2ZM904,138h3v1h-3ZM901,139h5v1h-5ZM902,140h3v1h-3ZM903,141h1v1h-1ZM839,179h1v1h-1ZM838,180h2v1h-2ZM833,181h1v1h-1ZM837,181h3v1h-3ZM833,182h2v1h-2ZM836,182h3v1h-3ZM833,183h5v1h-5ZM834,184h3v1h-3ZM835,185h1v1h-1ZM839,199h1v1h-1ZM838,200h2v1h-2ZM833,201h1v1h-1ZM837,201h3v1h-3ZM833,202h2v1h-2ZM836,202h3v1h-3ZM833,203h5v1h-5ZM834,204h3v1h-3ZM835,205h1v1h-1Z"/></svg>

<div class="btn" style="left:922px;top:182px;width:29px;height:25px">
 <svg style="position:absolute;left:0;top:0" width="27" height="23"><rect x="7.5" y="3.5" width="12" height="14" fill="#00e0f0" stroke="#000" stroke-width="1"/><rect x="19.5" y="4" width="1" height="14" fill="#000"/><rect x="9" y="5" width="9" height="2" fill="#f0e020"/><g fill="#005060"><rect x="9" y="8" width="2" height="1"/><rect x="12" y="8" width="2" height="1"/><rect x="15" y="8" width="2" height="1"/><rect x="9" y="10" width="2" height="1"/><rect x="12" y="10" width="2" height="1"/><rect x="15" y="10" width="2" height="1"/><rect x="9" y="12" width="2" height="1"/><rect x="12" y="12" width="2" height="1"/><rect x="15" y="12" width="2" height="1"/><rect x="9" y="14" width="2" height="1"/><rect x="12" y="14" width="2" height="1"/><rect x="15" y="14" width="2" height="1"/></g></svg>
</div>

<div class="lbl" style="left:844px;top:214px">X</div>
<div class="lbl" style="left:883px;top:214px">Y (-)</div>
<div class="lbl" style="left:932px;top:214px">Z</div>
<div class="tb" style="left:826px;top:230px;width:41px;height:19px"></div>
<div class="tb" style="left:870px;top:230px;width:40px;height:19px;padding-top:2px"><span>-0.05</span></div>
<div class="tb" style="left:914px;top:230px;width:41px;height:19px;padding-top:2px"><span>-0.048</span></div>

<div class="lbl" style="left:822px;top:269px;transform:scaleX(.96)">Wire</div>
<div class="trk" style="left:857px;top:266px;width:101px;height:17px"></div>
<div class="sbb" style="left:857px;top:266px;width:17px;height:17px"></div>
<div class="sbb" style="left:874px;top:266px;width:8px;height:17px"></div>
<div class="sbb" style="left:941px;top:266px;width:17px;height:17px"></div>
<svg class="abs" style="left:0;top:0;pointer-events:none" width="973" height="300">
<g fill="#000"><path d="M867.5,96.5 L871,93 V100 Z"/><path d="M949.5,96.5 L946,93 V100 Z"/><path d="M867.5,116.5 L871,113 V120 Z"/><path d="M949.5,116.5 L946,113 V120 Z"/>
<path d="M861.5,274.5 L866,270 V279 Z"/><path d="M952.5,274.5 L948,270 V279 Z"/></g>
</svg>
</body></html>
